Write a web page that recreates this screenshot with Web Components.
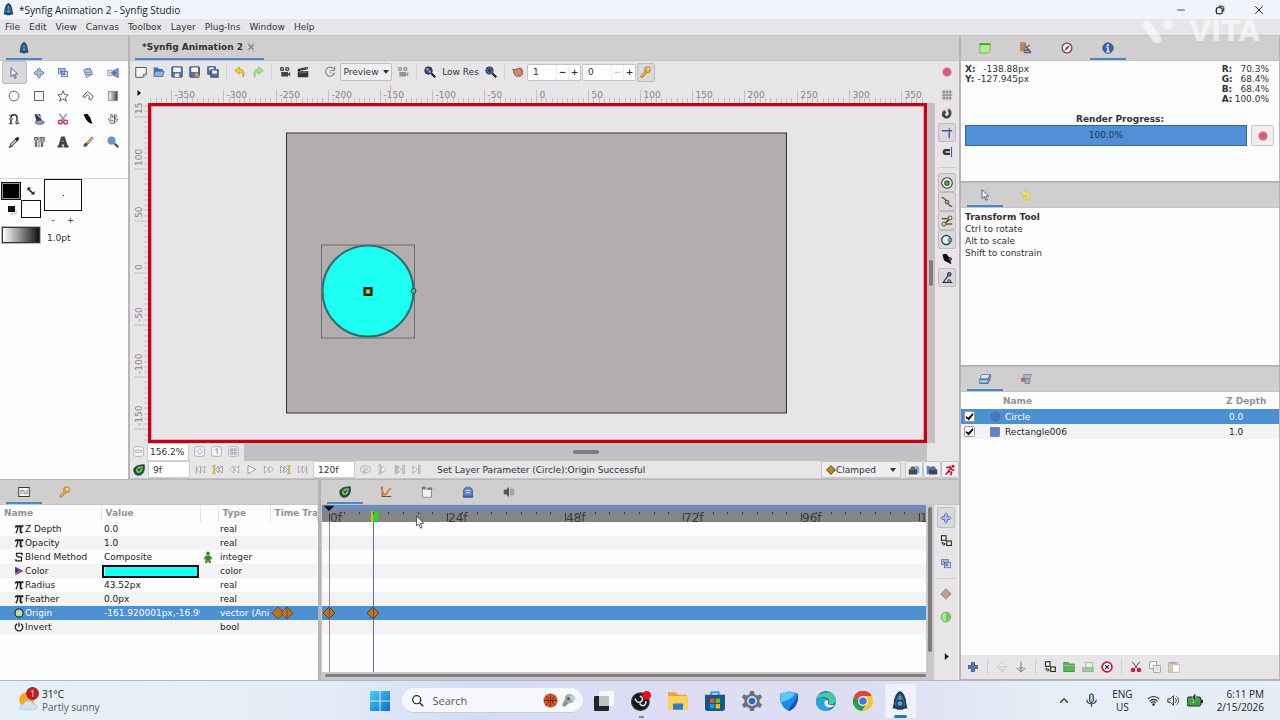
<!DOCTYPE html>
<html lang="en">
<head>
<meta charset="utf-8">
<title>Synfig Studio</title>
<style>
    body {
        margin: 0;
        background: #e7e5e7;
        color: #2e3436;
        font: 9px/12px "DejaVu Sans", sans-serif;
    }
</style>
</head>
<body>
<studio-desktop></studio-desktop>

<script>
const BASE = `
    *, *::before, *::after { box-sizing: border-box; }
    button, input, select { font: inherit; color: inherit; margin: 0; padding: 0; border: 0; background: none; min-width: 0; }
    button { display: flex; align-items: center; justify-content: center; }
    svg { display: block; }
`;

// All icons are drawn on a 16 x 16 grid
const ICONS = {
    synfig: '<path d="M8 0C11 1 13 6 13 10L14 14C12 14 11 14 10 15H6C5 14 4 14 2 14L3 10C3 6 5 1 8 0Z" fill="#1d3c5c"/><path d="M8 2C10 4 12 8 12 11C11 13 10 13 8 13C6 13 5 13 4 11C4 8 6 4 8 2Z" fill="#34709f"/><circle cx="8" cy="10" r="2.500" fill="#5d9fd0" stroke="#173250"/><path d="M8 4V7" stroke="#7fb6dd"/>',
    arrow: '<path d="M4 1V13L7 10L9 15L11 14L9 9.500H13Z" fill="#f4f6fb" stroke="#4b5872" stroke-width="1.200"/>',
    move: '<path d="M8 1L10.500 4H9.500V6.500H12V5.500L15 8L12 10.500V9.500H9.500V12H10.500L8 15L5.500 12H6.500V9.500H4V10.500L1 8L4 5.500V6.500H6.500V4H5.500Z" fill="#b9cdef" stroke="#4a66a0"/>',
    scale: '<rect x="2" y="2" width="9" height="7" fill="#a9bbdc" stroke="#5a74a8"/><rect x="6" y="6" width="8" height="7" fill="#c9d6ef" stroke="#4a66a0"/><path d="M4 4L10 10M10 7V10H7" stroke="#35508a" fill="none"/>',
    rotate: '<path d="M2 4L11 2L14 10L6 14Z" fill="#c4d1ea" stroke="#5a74a8"/><path d="M4 7H11M5 10H12M4 3C8 1 13 4 13 8" stroke="#4a66a0" fill="none"/>',
    mirror: '<path d="M1 4L7 5V11L1 12Z" fill="#e6edf9" stroke="#7288b4"/><path d="M15 2L8 5V11L15 14Z" fill="#7f9ccf" stroke="#4a66a0"/><path d="M3 8H11M10 6L12 8L10 10" stroke="#35508a" fill="none"/>',
    circle: '<circle cx="8" cy="8" r="6.500" fill="#fafafa" stroke="#555" stroke-width="1.200"/>',
    rect: '<rect x="2" y="2" width="12" height="12" fill="#fafafa" stroke="#555" stroke-width="1.200"/>',
    star: '<path d="M8 1L10 6L15 6.500L11 10L12.500 15L8 12L3.500 15L5 10L1 6.500L6 6Z" fill="#fafafa" stroke="#555" stroke-width="1.200"/>',
    polygon: '<path d="M1 9L7 2L15 8L12 13L9 12L10 9L7 6L4 10Z" fill="#fafafa" stroke="#555" stroke-width="1.200"/>',
    gradient: '<defs><linearGradient id="g"><stop offset="0" stop-color="#fff"/><stop offset="1" stop-color="#444"/></linearGradient></defs><rect x="2" y="2" width="12" height="12" fill="url(#g)" stroke="#777"/>',
    spline: '<path d="M4 15V6C4 1 12 1 12 6V15" stroke="#333" fill="none" stroke-width="2"/><path d="M1 3H8M1 14H6M10 14H15" stroke="#333"/><circle cx="4" cy="8" r="1.800" fill="#e9e34a" stroke="#444"/><circle cx="12" cy="12" r="1.800" fill="#e9e34a" stroke="#444"/>',
    bucket: '<path d="M3 2H9L11 9L5 11Z" fill="#3b3f55" stroke="#222"/><ellipse cx="9" cy="12.500" rx="6" ry="2.500" fill="#8fa5d8" stroke="#444"/><path d="M5 1L12 8" stroke="#c8c8d8" stroke-width="1.500"/>',
    cutout: '<path d="M3 1L10 10M13 1L6 10" stroke="#999" stroke-width="2"/><circle cx="4.500" cy="12" r="2.500" fill="#fff" stroke="#c22a45" stroke-width="1.800"/><circle cx="11.500" cy="12" r="2.500" fill="#fff" stroke="#c22a45" stroke-width="1.800"/>',
    width: '<path d="M2 2L7 1L11 6L14 15L8 12L5 8Z" fill="#0a0a0a"/>',
    brushhand: '<path d="M2 8L5 6V2H7V6L12 2L13 4L10 8H14V10L9 14H5Z" fill="#eee" stroke="#555"/><path d="M4 9L9 11M10 2V13" stroke="#444"/>',
    sketch: '<path d="M2 15L4 10L11 3L14 5L7 12Z" fill="#bbb" stroke="#222"/><path d="M9 4L13 1L15 3L12 7Z" fill="#222"/><path d="M1 15L6 14" stroke="#222"/>',
    bones: '<path d="M2 2H6V5L5 6V14H3V6L2 5ZM8 1V15M10 2H15V7L13 9V14H11V9Z" stroke="#555" fill="#aaa" stroke-width="1.200"/>',
    text: '<path d="M6 1H10L14 13H15V15H9V13H10L9.500 11H6.500L6 13H7V15H1V13H2ZM7 8H9L8 4Z" fill="#444" stroke="#222" stroke-width=".500"/>',
    brush: '<path d="M2 14C2 10 4 9 6 9L8 11C7 14 4 15 2 14Z" fill="#6a4a2a"/><path d="M6 9L13 1L15 3L8 11Z" fill="#d9b98a" stroke="#7a5c38"/>',
    zoom: '<circle cx="6" cy="6" r="4.500" fill="#5f97d6" stroke="#7e93ac" stroke-width="2"/><path d="M10 10L15 15" stroke="#444" stroke-width="2.500"/>',
    swap: '<path d="M4 5L11 12" stroke="#111" stroke-width="3"/><path d="M1 8V1H8ZM15 8V15H8Z" fill="#111"/>',
    page: '<path d="M1 2H15V11L11 15H1Z" fill="#f4f4f4" stroke="#555" stroke-width="1.300"/><path d="M15 11H11V15" fill="#bbb" stroke="#555"/>',
    open: '<path d="M1 2H6L8 4H13V14H1Z" fill="#3f6fae"/><path d="M3 7H15L13 14H1Z" fill="#8fb3e0" stroke="#3f6fae"/>',
    save: '<rect x="1" y="1" width="14" height="14" rx="1" fill="#55719f" stroke="#2c4268"/><rect x="3" y="2" width="10" height="6" fill="#f6f6f6"/><rect x="5" y="10" width="6" height="5" fill="#dfe4ee"/>',
    saveas: '<rect x="1" y="1" width="13" height="14" rx="1" fill="#55719f" stroke="#2c4268"/><rect x="3" y="2" width="9" height="6" fill="#f6f6f6"/><path d="M7 14L9 8L13 11L15 15L11 14Z" fill="#e8953a"/>',
    saveall: '<rect x="1" y="1" width="10" height="10" fill="#55719f" stroke="#2c4268"/><rect x="3" y="2" width="6" height="4" fill="#fff"/><rect x="5" y="5" width="10" height="10" fill="#55719f" stroke="#2c4268"/><rect x="7" y="6" width="6" height="4" fill="#fff"/>',
    undo: '<path d="M1 6L7 1V4C13 4 15 9 12 15C12 10 10 8 7 8V11Z" fill="#f0cf30" stroke="#bd9a1a"/>',
    redo: '<path d="M15 6L9 1V4C3 4 1 9 4 15C4 10 6 8 9 8V11Z" fill="#a9dc8c" stroke="#86bd6e"/>',
    render: '<circle cx="4" cy="4" r="3" fill="#555"/><circle cx="11" cy="4" r="3" fill="#555"/><rect x="3" y="8" width="9" height="6" fill="#444"/><path d="M12 10L15 8V14L12 12Z" fill="#555"/><circle cx="4" cy="4" r="1" fill="#ddd"/><circle cx="11" cy="4" r="1" fill="#ddd"/>',
    clapper: '<path d="M1 4L14 1L15 4L1 7Z" fill="#222"/><path d="M4 3L6 5M8 2L10 4M12 1L14 4" stroke="#ddd"/><rect x="1" y="7" width="14" height="8" fill="#333"/><path d="M2 9H14" stroke="#888"/>',
    refresh: '<path d="M13 4A6 6 0 1 0 14 9M14 1V6H9" fill="none" stroke="#888" stroke-width="1.500"/><path d="M8 5V9H12" fill="none" stroke="#aaa"/>',
    lowres: '<circle cx="6" cy="6" r="5" fill="#33425e" stroke="#1d2636"/><path d="M3 3H6V6H3ZM6 6H9V9H6Z" fill="#8fa8cf"/><path d="M10 10L15 15" stroke="#222" stroke-width="3"/>',
    hires: '<circle cx="6" cy="6" r="5" fill="#4f6fa5" stroke="#27354e"/><path d="M6 2V10M2 6H10M3 3L9 9M9 3L3 9" stroke="#27354e"/><path d="M10 10L15 15" stroke="#222" stroke-width="3"/>',
    onion: '<path d="M1 4L4 5C6 3 8 4 9 3C12 2 14 4 14 7C15 11 13 14 9 14C5 14 2 11 2 7Z" fill="#c4785c" stroke="#7d5040"/><path d="M5 6C4 9 6 12 9 14M9 4C8 7 10 11 12 12" stroke="#e9b394" fill="none"/>',
    key: '<circle cx="10" cy="5" r="4" fill="#e0ad4e" stroke="#ad7c2b"/><path d="M7 7L1 13V15H4L9 9Z" fill="#e0ad4e" stroke="#ad7c2b"/><circle cx="11" cy="4" r="1.300" fill="#fff"/>',
    record: '<circle cx="8" cy="8" r="6" fill="#cf6079" stroke="#e3b0ba" stroke-width="1.500"/>',
    grid: '<path d="M4 1V15M8 1V15M12 1V15M1 4H15M1 8H15M1 12H15" stroke="#777" stroke-width="1.200"/>',
    magnet: '<path d="M2 5L5 3L7 6L5 9L8 11C11 9 11 6 9 4L11 1C15 3 15 10 11 13C7 16 1 12 1 9Z" fill="#444"/><path d="M2 5L5 3M9 4L11 1" stroke="#c06070" stroke-width="2"/>',
    guide: '<path d="M1 5H15M11 2V15" stroke="#3f5f9f" stroke-width="1.800"/>',
    magnetguide: '<path d="M12 4H6C1 4 1 12 6 12H12V9H7C5 9 5 7 7 7H12Z" fill="#333"/><path d="M14 1V15" stroke="#3f5f9f" stroke-width="1.500"/>',
    hposition: '<circle cx="8" cy="8" r="7" fill="#fff" stroke="#333" stroke-width="1.500"/><circle cx="8" cy="8" r="3" fill="#49b849" stroke="#195c19" stroke-width="1.500"/>',
    hvertex: '<path d="M1 2C8 2 8 14 15 14" stroke="#333" fill="none" stroke-width="1.500"/><circle cx="8" cy="8" r="2.500" fill="#d8a848" stroke="#333"/>',
    htangent: '<path d="M1 5H12L4 12H15" stroke="#222" stroke-width="1.500" fill="none"/><circle cx="12" cy="4" r="2.700" fill="#e9e34a" stroke="#333"/><circle cx="4" cy="12" r="2.700" fill="#e9e34a" stroke="#333"/>',
    hradius: '<circle cx="7" cy="8" r="6" fill="#eaf6fa" stroke="#2c3e50" stroke-width="1.800"/><circle cx="12" cy="8" r="2.500" fill="#45c0c4" stroke="#245"/>',
    hwidth: '<path d="M2 2L7 1L11 6L14 15L8 12L4 10Z" fill="#0a0a0a"/><circle cx="12" cy="8" r="2" fill="#c032b0" stroke="#222"/>',
    hangle: '<path d="M12 1L3 14H15" stroke="#222" fill="none" stroke-width="1.500"/><circle cx="11" cy="3" r="2.500" fill="#4b7ce8" stroke="#222"/><circle cx="11" cy="12" r="2" fill="#7da0ee" stroke="#333"/>',
    playmark: '<path d="M5 2L12 8L5 14Z" fill="#111"/>',
    zoomout: '<rect x="1" y="1" width="14" height="14" rx="3" fill="#f6f6f6" stroke="#999"/><rect x="4" y="6" width="8" height="3" fill="#fff" stroke="#888"/>',
    zoomin: '<rect x="1" y="1" width="14" height="14" rx="3" fill="#f6f6f6" stroke="#999"/><path d="M8 4L12 8L8 12L4 8Z" fill="#fff" stroke="#777"/>',
    zoomone: '<rect x="1" y="1" width="14" height="14" rx="3" fill="#f6f6f6" stroke="#999"/><path d="M6 6L9 4V12" stroke="#999" stroke-width="1.500" fill="none"/>',
    zoomfit: '<rect x="1" y="1" width="14" height="14" rx="3" fill="#f6f6f6" stroke="#999"/><path d="M4 4H7V7H4ZM9 4H12V7H9ZM4 9H7V12H4ZM9 9H12V12H9Z" fill="#fff" stroke="#777"/>',
    first: '<path d="M2 2V14M3 8L8 3V13ZM9 8L14 3V13Z" fill="#fff" stroke="#888"/>',
    prevkey: '<path d="M1 2H5L3 8L5 14H1L3 8Z" fill="#e5d855" stroke="#b2a533"/><path d="M5 8L10 3V13ZM10 8L15 3V13Z" fill="#fff" stroke="#777"/>',
    prev: '<path d="M1 8L7 3V13ZM8 8L14 3V13Z" fill="#fff" stroke="#888"/>',
    play: '<path d="M3 2L14 8L3 14Z" fill="#fff" stroke="#888" stroke-width="1.200"/>',
    next: '<path d="M15 8L9 3V13ZM8 8L2 3V13Z" fill="#fff" stroke="#888"/>',
    nextkey: '<path d="M15 2H11L13 8L11 14H15L13 8Z" fill="#e5d855" stroke="#b2a533"/><path d="M11 8L6 3V13ZM6 8L1 3V13Z" fill="#fff" stroke="#777"/>',
    last: '<path d="M14 2V14M13 8L8 3V13ZM7 8L2 3V13Z" fill="#fff" stroke="#888"/>',
    loop: '<rect x="1" y="3" width="14" height="9" rx="4" fill="#fff" stroke="#888"/><rect x="4" y="6" width="8" height="3" rx="1" fill="#e7e5e7" stroke="#999"/><path d="M7 10V15L4 12Z" fill="#fff" stroke="#999"/>',
    boundlow: '<path d="M3 1H5V15H3ZM7 3L13 8L7 13Z" fill="#fff" stroke="#999"/>',
    boundboth: '<path d="M2 2H4V14H2ZM6 3L11 8L6 13ZM13 2H15V14H13Z" fill="#fff" stroke="#888"/>',
    boundup: '<path d="M3 3L9 8L3 13ZM11 2H13V14H11Z" fill="#fff" stroke="#888"/>',
    timetrack: '<path d="M15 1C16 8 14 15 7 15C3 15 1 12 1 8C1 4 6 1 15 1Z" fill="#2c4a3d" stroke="#23384c"/><path d="M13 3C13 8 12 12 7 12C5 12 4 10 4 8C4 5 8 3 13 3Z" fill="#6fd05f"/><path d="M6 6L8 9L11 5" fill="none" stroke="#1c4020" stroke-width="1.500"/>',
    graphs: '<path d="M3 1V14H15" stroke="#555" stroke-width="1.500" fill="none"/><path d="M1 3C3 3 4 12 6 12C9 12 10 5 15 3" stroke="#ef7a22" stroke-width="2.500" fill="none"/>',
    canvasmeta: '<path d="M2 4H14V15H2Z" fill="#f1f1f1" stroke="#777"/><path d="M1 1H6V4H1ZM9 2H15V5H9Z" fill="#777"/>',
    library: '<path d="M2 15V6C2 0 14 0 14 6V15Z" fill="#5b83c4" stroke="#3c5c94"/><path d="M5 6H11M5 9H11" stroke="#d6e2f5" stroke-width="1.500"/><path d="M1 14H15" stroke="#3c5c94" stroke-width="2"/>',
    sound: '<path d="M1 5H4L8 1V15L4 11H1Z" fill="#555"/><path d="M10 4V12M12 2V14M14 4V12" stroke="#8b97ab" stroke-width="1.500"/>',
    params: '<rect x="1" y="2" width="14" height="12" fill="#fff" stroke="#333" stroke-width="1.300"/><path d="M4 5V11M6 5V7M8 5V11M10 9V11M12 5V11" stroke="#444"/>',
    note: '<path d="M1 2H15V12L12 15H1Z" fill="#b4e88c" stroke="#6ba84a"/><path d="M1 3H15" stroke="#4f9a38" stroke-width="2"/>',
    palette: '<path d="M1 1H7V4H1ZM1 5H7V8H1ZM1 9H7V12H1Z" fill="#e89a4a" stroke="#a35c28"/><path d="M7 5L14 13M5 14H15M10 6L13 4M5 11H12" stroke="#4d6288" stroke-width="2"/>',
    navigator: '<circle cx="8" cy="8" r="6.500" fill="#f6eef0" stroke="#7b4453" stroke-width="1.800"/><path d="M12 4L9 9L4 12L7 7Z" fill="#7b3040"/>',
    info: '<circle cx="8" cy="8" r="7" fill="#3467b0" stroke="#274e86"/><path d="M8 7V13M6 13H10M6 7H8" stroke="#fff" stroke-width="1.800"/><circle cx="8" cy="4" r="1.300" fill="#fff"/>',
    history: '<path d="M1 6L7 1V4C12 4 15 8 13 12C11 16 5 15 4 11L7 11C9 12 11 10 9 8H7V11Z" fill="#efe063" stroke="#d4c34a"/>',
    layers: '<path d="M4 2H15L12 8H1Z" fill="#dbe5f5" stroke="#5b76a8"/><path d="M1 8H12V14H1ZM12 8L15 2V8L12 14" fill="#7d9ccf" stroke="#44608f"/><path d="M1 11H12" stroke="#fff"/>',
    canvases: '<path d="M5 2H15L13 8H5Z" fill="#a9b8d0" stroke="#6d7b94"/><path d="M5 8H13V14H7Z" fill="#b6aab8" stroke="#7d7080"/><path d="M1 7L7 6V11L2 12Z" fill="#b36474"/>',
    pi: '<path d="M1 5C2 2 3 2 5 2H15V5H12V12C12 13 13 13 14 12V14C11 16 9 15 9 12V5H7C7 9 6 12 4 15L2 14C4 11 5 8 5 5H4C3 5 3 5 2 6Z" fill="#222"/>',
    enumtype: '<path d="M13 5V2H4V6L8 8H12V14H3V11M12 8L6 8" stroke="#222" fill="none" stroke-width="2"/>',
    colortype: '<path d="M2 1L8 8L2 15Z" fill="#2fb56c"/><path d="M2 1L15 8H8Z" fill="#3347c9"/><path d="M2 15L15 8H7Z" fill="#d83434"/><path d="M2 1L7 8L2 11Z" fill="#222b8f"/>',
    origin: '<circle cx="8" cy="8" r="6.500" fill="#b5e2a6" stroke="#222" stroke-width="1.800"/>',
    power: '<path d="M5 3A6 6 0 1 0 11 3M8 1V8" stroke="#222" stroke-width="2" fill="none"/>',
    man: '<circle cx="8" cy="3" r="2.500" fill="#3d8a20"/><path d="M5 6H11L14 11H11L12 16H9L8 12L7 16H4L5 11H2Z" fill="#3d8a20"/>',
    keyframe: '<path d="M8 0L16 8L8 16L0 8Z" fill="#b9741c" stroke="#59401e"/>',
    keyframeline: '<path d="M8 0L16 8L8 16L0 8Z" fill="#b9741c" stroke="#59401e"/><path d="M8 0V16" stroke="#4d3a6a"/>',
    clamped: '<path d="M8 1L15 8L8 15L1 8Z" fill="#b98a1c" stroke="#4a3a10" stroke-width="1.500"/>',
    lockpast: '<path d="M10 2L15 4V12L10 14Z" fill="#7fa8d8"/><path d="M1 7H12V14H1Z" fill="#44494c"/><path d="M3 7V6C4 2 9 2 10 6V7Z" fill="#5c6468"/>',
    lockfuture: '<path d="M1 2L7 4V12L1 14Z" fill="#4f88cc"/><path d="M4 7H15V14H4Z" fill="#3c4854"/><path d="M6 7V6C7 2 12 2 13 6V7Z" fill="#4f6a88"/>',
    animate: '<circle cx="12" cy="3" r="2" fill="#d01028"/><path d="M3 5L8 4L11 8L14 8M8 6L6 10L10 11L9 15M6 10L2 14" stroke="#d01028" stroke-width="2.200" fill="none"/>',
    group: '<rect x="2" y="1" width="6" height="6" fill="#fff" stroke="#222" stroke-width="1.500"/><rect x="9" y="8" width="6" height="6" fill="#fff6b8" stroke="#222" stroke-width="1.500"/><path d="M3 9V12H7M5 10L7 12L5 14" stroke="#222" stroke-width="1.300" fill="none"/>',
    diamondoff: '<path d="M8 1L15 8L8 15L1 8Z" fill="#b9a27c" stroke="#8a8070"/>',
    half: '<circle cx="8" cy="8" r="6.500" fill="#a6e890" stroke="#5c9a4c"/><path d="M8 2V14A6 6 0 0 0 8 2Z" fill="#74c860"/>',
    plus: '<path d="M6 2H10V6H14V10H10V14H6V10H2V6H6Z" fill="#4f78b8" stroke="#2f4a7a"/>',
    up: '<path d="M8 2L14 8H10L8 6L6 8H2ZM8 7L12 11H9V14H7V11H4Z" fill="#f6f6f6" stroke="#bbb"/>',
    down: '<path d="M8 15L14 9M8 15L2 9M8 1V14M5 8L8 11L11 8" fill="none" stroke="#777" stroke-width="1.300"/>',
    newgroup: '<path d="M1 2H7L8 4H15V14H1Z" fill="#62b25a" stroke="#36803a"/><path d="M1 6H15" stroke="#8fd685"/>',
    dupgroup: '<path d="M5 2H14V12H5Z" fill="#e6efe2" stroke="#98ac94"/><path d="M1 9H15V14H1Z" fill="#a9c8a2" stroke="#86a080"/>',
    remove: '<circle cx="8" cy="8" r="6.500" fill="#fff" stroke="#c0203a" stroke-width="2.500"/><path d="M5.500 5.500L10.500 10.500M10.500 5.500L5.500 10.500" stroke="#222" stroke-width="1.500"/>',
    cut: '<path d="M3 1L10 10M13 1L6 10" stroke="#666" stroke-width="1.500"/><circle cx="4" cy="12" r="3" fill="#c0203a"/><circle cx="12" cy="12" r="3" fill="#c0203a"/>',
    copy: '<rect x="1" y="1" width="9" height="9" fill="#fff" stroke="#888"/><rect x="6" y="6" width="9" height="9" fill="#fff" stroke="#888"/><path d="M8 9H13M8 12H13" stroke="#aaa"/>',
    paste: '<rect x="1" y="2" width="12" height="13" fill="#d8cdb8" stroke="#b0a48e"/><rect x="6" y="5" width="9" height="10" fill="#fdfdfd" stroke="#bbb"/><rect x="4" y="1" width="6" height="3" fill="#aaa"/>',
    square: '<rect x="1" y="1" width="14" height="14" fill="#5a86c4" stroke="#47699c"/>',
    disc: '<circle cx="8" cy="8" r="6.500" fill="#4678be" stroke="#3d66a4"/>',
    close: '<path d="M4 4L12 12M12 4L4 12" stroke="#888" stroke-width="2.500"/><path d="M2 2H6M10 2H14M2 14H6M10 14H14" stroke="#999"/>',
    winmin: '<path d="M3 8H13" stroke="#111"/>',
    winmax: '<rect x="3" y="5" width="8" height="8" rx="2" fill="none" stroke="#111" stroke-width="1.500"/><path d="M6 3H11C12.500 3 13 4 13 5V10" fill="none" stroke="#111" stroke-width="1.300"/>',
    winclose: '<path d="M3 3L13 13M13 3L3 13" stroke="#111" stroke-width="1.200"/>',
    start: '<defs><linearGradient id="w" x2="1" y2="1"><stop offset="0" stop-color="#4fd0f4"/><stop offset="1" stop-color="#0a6cc8"/></linearGradient></defs><path d="M0 0H7.600V7.600H0ZM8.400 0H16V7.600H8.400ZM0 8.400H7.600V16H0ZM8.400 8.400H16V16H8.400Z" fill="url(#w)"/>',
    search: '<circle cx="7" cy="7" r="5" fill="none" stroke="#222" stroke-width="1.500"/><path d="M11 11L15 15" stroke="#222" stroke-width="1.800"/>',
    ball: '<circle cx="8" cy="8" r="7.500" fill="#d8582c"/><path d="M8 1V15M1 8H15M3 3C7 6 7 11 3 13M13 3C9 6 9 11 13 13" stroke="#6d2614" fill="none"/>',
    whistle: '<path d="M5 5L9 10L4 15L1 13Z" fill="#8e949b"/><circle cx="9" cy="6" r="5" fill="#a4a9af"/><path d="M8 2L15 4V8L11 8Z" fill="#c8ccd1"/><circle cx="8" cy="6" r="1.800" fill="#666"/>',
    taskview: '<rect x="0" y="4" width="12" height="12" rx="1" fill="#232629"/><rect x="4" y="0" width="12" height="12" rx="1" fill="#f7f7f7"/><rect x="4" y="4" width="8" height="8" fill="#bfc1c4"/>',
    obs: '<circle cx="7.500" cy="8.500" r="7" fill="#17181b" stroke="#333"/><path d="M7 4C10 5 10 8 7 9C4 10 4 7 3 6M12 8C12 12 9 13 7 10" stroke="#ddd" stroke-width="1.300" fill="none"/><circle cx="12.500" cy="3.500" r="3.500" fill="#e80f1c"/>',
    explorer: '<path d="M0 1H6L8 3H15V14H0Z" fill="#e8a92c"/><path d="M0 4H16V15H0Z" fill="#fbd35c"/><path d="M4 10H12V15H4Z" fill="#2b7cc0"/>',
    store: '<path d="M5 4V1H11V4" fill="none" stroke="#3aa0dc" stroke-width="1.500"/><path d="M0 3H16V14C16 15 15 16 14 16H2C1 16 0 15 0 14Z" fill="#17578c"/><path d="M4 6H7.500V9.500H4Z" fill="#f25022"/><path d="M8.500 6H12V9.500H8.500Z" fill="#7fba00"/><path d="M4 10.500H7.500V14H4Z" fill="#00a4ef"/><path d="M8.500 10.500H12V14H8.500Z" fill="#ffb900"/>',
    settings: '<path d="M6.500 0H9.500L10 2.500L12.500 3.500L14.500 2.500L16 5L14 7V9L16 11L14.500 13.500L12.500 12.500L10 13.500L9.500 16H6.500L6 13.500L3.500 12.500L1.500 13.500L0 11L2 9V7L0 5L1.500 2.500L3.500 3.500L6 2.500Z" fill="#6a7179"/><circle cx="8" cy="8" r="4" fill="#cfd5db"/><circle cx="8" cy="8" r="2.500" fill="#2a6ab0"/>',
    shield: '<path d="M8 0C11 2 14 1 15 2C16 9 13 14 8 16C3 14 0 9 1 2C3 1 5 2 8 0Z" fill="#1f8be8"/><path d="M15 2C16 9 13 14 8 16C7 13 13 10 15 2Z" fill="#1150b8"/><path d="M1 2C3 1 5 2 8 0C10 2 12 2 13 2C10 7 5 8 2 9C1 6 1 4 1 2Z" fill="#5cc8f8"/>',
    edge: '<circle cx="8" cy="8" r="8" fill="#1769b8"/><path d="M0 7C1 0 15-2 16 7C16 11 11 11 10 10C12 5 5 3 0 7Z" fill="#48c9a0"/><path d="M0 7C4 4 8 5 8 7C5 9 7 14 12 14C5 19-1 13 0 7Z" fill="#2aa5e0"/><path d="M8 7C10 7 10 9 9.500 10C11 12 14 11 15 11C13 14 8 14 7 11C6 9 7 8 8 7Z" fill="#e8eefa"/>',
    chrome: '<circle cx="8" cy="8" r="8" fill="#f5c32c"/><path d="M1 4A8 8 0 0 1 15 4H8L5 9Z" fill="#dd4437"/><path d="M1 4A8 8 0 0 0 7 16L11 10L5 9Z" fill="#2c9b4a"/><circle cx="8" cy="8" r="4" fill="#fff"/><circle cx="8" cy="8" r="3" fill="#3f79e0"/>',
    chevron: '<path d="M3 10L8 5L13 10" stroke="#222" stroke-width="1.500" fill="none"/>',
    mic: '<rect x="6" y="1" width="4" height="9" rx="2" fill="#bcd0e4" stroke="#345" stroke-width="1.200"/><path d="M3 7C3 13 13 13 13 7M8 12V15" stroke="#345" stroke-width="1.200" fill="none"/>',
    wifi: '<path d="M1 6C5 2 11 2 15 6M3 9C6 6 10 6 13 9M5 11C7 9 9 9 11 11" stroke="#222" stroke-width="1.300" fill="none"/><circle cx="8" cy="13" r="1.500" fill="#222"/>',
    volume: '<path d="M1 6H4L8 2V14L4 10H1Z" fill="none" stroke="#333" stroke-width="1.200"/><path d="M10 5C12 7 12 9 10 11M12 3C15 6 15 10 12 13" stroke="#333" fill="none" stroke-width="1.200"/>',
    battery: '<rect x="0" y="4" width="14" height="9" rx="2" fill="#3fa33c" stroke="#222"/><path d="M15 7V10" stroke="#222" stroke-width="2"/><path d="M7 1L5 6H7L6 10L10 5H8L9 1Z" fill="#222" stroke="#fff" stroke-width=".500"/>',
    weather: '<circle cx="7" cy="7" r="6" fill="#f5a623"/><path d="M4 15C0 15 1 10 4 11C5 7 11 7 12 10C16 10 16 15 13 15Z" fill="#cfdff5" stroke="#a9c0e4" stroke-width=".500"/>',
    cursor: '<path d="M3 0V12L6 10L8 15L10 14L8 9H12Z" fill="#fff" stroke="#333"/>'
};

class StudioElement extends HTMLElement {
    connectedCallback() {
        const shadow = this.attachShadow({ mode: 'open' });
        shadow.innerHTML = `<style>${BASE}</style>${this.render()}`;
    }
}

class StudioIcon extends StudioElement {
    render() {
        const size = this.getAttribute('size') || 12;
        return `
<style>
    :host { display: block; flex: none; }
</style>
<svg width="${size}" height="${size}" viewBox="0 0 16 16" aria-hidden="true">${ICONS[this.getAttribute('name')]}</svg>`;
    }
}

class IconButton extends StudioElement {
    render() {
        return `
<style>
    :host { display: block; flex: none; width: 18px; height: 19px; }
    button { width: 100%; height: 100%; border: 1px solid transparent; border-radius: 2px; }
    :host([on]) button { background: #dad8da; border-color: #bfbdbf; }
    :host([raised]) button { background: #f0eef0; border-color: #c6c4c6; }
    :host([dim]) button { opacity: .5; }
</style>
<button type="button" aria-label="${this.getAttribute('name')}"><studio-icon name="${this.getAttribute('name')}" size="${this.getAttribute('size') || 12}"></studio-icon></button>`;
    }
}

class DockTabs extends StudioElement {
    render() {
        const active = this.getAttribute('active') || '0';
        const tabs = this.getAttribute('icons').split(' ').map((name, i) => `
            <button type="button" role="tab" aria-label="${name}" aria-selected="${String(i) === active}"><studio-icon name="${name}"></studio-icon></button>`);
        return `
<style>
    :host { display: flex; flex: none; gap: 5px; height: 25px; padding: 0 6px; background: #d0cecf; border-bottom: 1px solid #c6c4c5; }
    button { width: 36px; border-bottom: 2px solid transparent; border-top: 2px solid transparent; }
    button[aria-selected=true] { border-bottom-color: #4a86c8; }
</style>${tabs.join('')}`;
    }
}

class TitleBar extends StudioElement {
    render() {
        return `
<style>
    :host { display: flex; flex: none; align-items: center; gap: 4px; height: 19px; padding: 0 2px 0 2px; background: #f0f4fb; color: #222; font: 10px/14px "Open Sans", "Noto Sans", sans-serif; }
    span { flex: 1; }
    .controls { display: flex; }
    .controls button { width: 39px; }
</style>
<studio-icon name="synfig" size="13"></studio-icon>
<span>*Synfig Animation 2 - Synfig Studio</span>
<div class="controls">
    <button type="button" aria-label="Minimize"><studio-icon name="winmin"></studio-icon></button>
    <button type="button" aria-label="Restore"><studio-icon name="winmax"></studio-icon></button>
    <button type="button" aria-label="Close"><studio-icon name="winclose"></studio-icon></button>
</div>`;
    }
}

class MenuBar extends StudioElement {
    render() {
        const items = ['File', 'Edit', 'View', 'Canvas', 'Toolbox', 'Layer', 'Plug-Ins', 'Window', 'Help'];
        return `
<style>
    :host { display: flex; flex: none; gap: 9px; height: 17px; padding: 0 5px; align-items: center; background: #e7e5e7; border-bottom: 1px solid #c4c2c4; }
</style>${items.map(item => `<button type="button">${item}</button>`).join('')}`;
    }
}

class ToolBox extends StudioElement {
    render() {
        const tools = 'arrow move scale rotate mirror circle rect star polygon gradient spline bucket cutout width brushhand sketch bones text brush zoom'.split(' ');
        return `
<style>
    :host { display: flex; flex-direction: column; flex: none; width: 130px; background: #fdfdfd; border-right: 2px solid #b6b4b6; }
    .tools { display: grid; grid-template-columns: repeat(5, 1fr); grid-auto-rows: 23px; padding: 0 3px 0 2px; height: 118px; border-bottom: 1px solid #d8d6d8; }
    .tools icon-button { width: auto; height: 23px; }
    .colors { display: flex; gap: 3px; padding-left: 1px; }
    .swatches { display: grid; grid-template: 18px 18px / 20px 20px; place-items: center; padding-top: 3px; }
    .swatches button { width: 20px; height: 18px; border: 1px solid #111; }
    .fg { background: #000; outline: 1px solid #999; outline-offset: -2px; }
    .bg { background: #fff; }
    .reset { width: 7px; height: 6px; background: #111; box-shadow: 2px 3px #ddd; }
    .brush { display: grid; place-items: center; width: 38px; height: 32px; border: 1px solid #111; }
    .brush i { width: 1px; height: 1px; background: #111; }
    .size { display: flex; justify-content: center; gap: 12px; padding-top: 3px; }
    .width { display: flex; gap: 7px; padding-left: 2px; align-items: center; }
    .ramp { width: 38px; height: 16px; border: 1px solid #333; background: linear-gradient(90deg, #fff, #111); outline: 1px solid #bbb; }
    .width span { padding-top: 6px; }
</style>
<dock-tabs icons="synfig"></dock-tabs>
<div class="tools">${tools.map((t, i) => `<icon-button name="${t}" ${i ? '' : 'on'}></icon-button>`).join('')}</div>
<div class="colors">
    <div class="swatches">
        <button class="fg" type="button" aria-label="Outline color"></button>
        <studio-icon name="swap" size="8"></studio-icon>
        <div class="reset"></div>
        <button class="bg" type="button" aria-label="Fill color"></button>
    </div>
    <div>
        <div class="brush"><i></i></div>
        <div class="size"><button type="button">-</button><button type="button">+</button></div>
    </div>
</div>
<div class="width"><div class="ramp"></div><span>1.0pt</span></div>`;
    }
}

class SpinBox extends StudioElement {
    render() {
        return `
<style>
    :host { display: flex; flex: none; width: 54px; height: 17px; background: #fff; border: 1px solid #c6c4c6; border-radius: 2px; }
    input { flex: 1; width: 0; padding-left: 5px; }
    button { width: 12px; border-left: 1px solid #eceaec; font-weight: bold; }
    :host([floor]) button:first-of-type { color: #ccc; }
</style>
<input type="text" aria-label="${this.getAttribute('label')}" value="${this.getAttribute('value')}"><button type="button">−</button><button type="button">+</button>`;
    }
}

class CanvasToolbar extends StudioElement {
    render() {
        const buttons = names => names.split(' ').map(n => `<icon-button name="${n}"></icon-button>`).join('');
        return `
<style>
    :host { display: flex; flex: none; align-items: center; height: 22px; padding: 0 3px 0 2px; }
    hr { flex: none; width: 1px; height: 16px; margin: 0 4px; border: 0; background: #d0ced0; }
    .preview { width: 52px; height: 18px; margin: 0 2px 0 1px; gap: 4px; border: 1px solid #bfbdbf; border-radius: 2px; background: #f0eef0; }
    .preview i { border: 3px solid transparent; border-top: 4px solid #333; border-bottom: 0; }
    .gap { width: 9px; }
    .low { width: 43px; text-align: center; }
    spin-box { margin: 0 1px 0 0; }
    .record { margin-left: auto; }
</style>
${buttons('page open save saveas saveall')}<hr>${buttons('undo redo')}<hr>${buttons('render clapper')}
<span class="gap"></span>${buttons('refresh')}
<button class="preview" type="button">Preview<i></i></button>
<icon-button name="render" dim></icon-button><hr>${buttons('lowres')}
<span class="low">Low Res</span>${buttons('hires')}<hr>${buttons('onion')}
<spin-box label="Past" value="1"></spin-box><spin-box label="Future" value="0" floor></spin-box>
<icon-button name="key" on></icon-button>
<icon-button class="record" name="record"></icon-button>`;
    }
}

// Ruler whose zero sits in the middle of its track; 50 units span 52 pixels
class CanvasRuler extends StudioElement {
    render() {
        const vertical = this.hasAttribute('vertical');
        const step = 5.21;
        const last = vertical ? 30 : 70;
        let marks = '';
        for (let i = -last - 9; i <= last + 9; i++) {
            const at = Math.round(i * step) - 1;
            const major = i % 10 === 0;
            if (vertical) {
                marks += `<path d="M${major ? 4 : 14} ${at + 1}H18"/>`;
                if (major) marks += `<text transform="translate(12 ${at - 2}) rotate(-90)">${-i * 5}</text>`;
            } else {
                marks += `<path d="M${at} ${major ? 7 : 15}V20"/>`;
                if (major) marks += `<text x="${at + 3}" y="15">${i * 5}</text>`;
            }
        }
        const origin = vertical ? 'y="50%"' : 'x="50%"';
        const pointer = vertical ? '' : '<path d="M-147 2V20" stroke="#aaa"/>';
        return `
<style>
    :host { display: block; overflow: hidden; min-height: 0; min-width: 0; contain: size; }
    path { stroke: #c2c0c2; }
    text { fill: #858385; font-size: 9px; }
</style>
<svg width="100%" height="100%"><svg ${origin} width="1" height="1" overflow="visible">${marks}${pointer}</svg></svg>`;
    }
}

class WorkArea extends StudioElement {
    render() {
        return `
<style>
    :host { display: block; overflow: hidden; border: 3px solid #c00418; outline: 1px solid #e9a0a8; outline-offset: -4px; background: #e7e5e8; contain: size; }
</style>
<svg width="100%" height="100%">
    <svg x="50%" y="50%" width="1" height="1" overflow="visible">
        <rect x="-251" y="-140" width="500" height="280" fill="#b3adb0" stroke="#333"/>
        <circle cx="-169.500" cy="18" r="45.500" fill="#1cfff0" stroke="#2d6f70" stroke-width="2"/>
        <rect x="-216" y="-28" width="93" height="93" fill="none" stroke="#6f6b6e"/>
        <rect x="-173" y="15" width="7" height="7" fill="#3d9a28" stroke="#111" stroke-width="2"/>
        <circle cx="-169.500" cy="18.500" r="2" fill="#8fe03c"/>
        <circle cx="-124" cy="18" r="2.500" fill="#3fb8b0" stroke="#245"/>
    </svg>
</svg>`;
    }
}

class CanvasWindow extends StudioElement {
    render() {
        const side = ['hposition', 'hvertex', 'htangent', 'hradius', 'hwidth', 'hangle'];
        const seek = ['first', 'prevkey', 'prev', 'play', 'next', 'nextkey', 'last'];
        return `
<style>
    :host { display: flex; flex-direction: column; flex: 1; min-width: 0; background: #e7e5e7; }
    .tabs { display: flex; flex: none; height: 25px; padding-left: 5px; background: #d0cecf; border-bottom: 1px solid #c6c4c5; }
    .tab { display: flex; align-items: center; gap: 3px; padding: 0 8px 0 7px; border-bottom: 2px solid #4a86c8; font-weight: bold; }
    .middle { display: flex; flex: 1; min-height: 0; }
    .view { display: grid; flex: 1; min-width: 0; grid-template: 20px 1fr 18px / 18px 1fr 8px; }
    .corner { display: grid; place-items: center; }
    .vscroll { display: flex; align-items: center; justify-content: center; background: #c3c1c3; }
    .vscroll i { width: 4px; height: 26px; border-radius: 2px; background: #7e7c7e; }
    .zoom { display: flex; grid-column: 1 / 3; }
    .hscroll { display: flex; flex: 1; align-items: center; justify-content: center; background: #c3c1c3; }
    .hscroll i { width: 26px; height: 4px; border-radius: 2px; background: #7e7c7e; }
    input { width: 42px; padding: 0 4px; background: #fff; border: 1px solid #cfcdcf; }
    .zoom input { padding: 0 2px; }
    .group { display: flex; padding: 0 2px; }
    .group icon-button, .zoom icon-button { width: 17px; height: 17px; }
    .side { display: flex; flex-direction: column; align-items: center; flex: none; width: 24px; padding-top: 2px; }
    .side hr { width: 18px; height: 1px; margin: 6px 0 5px; border: 0; background: #cfcdcf; }
    .time { display: flex; flex: none; align-items: center; height: 18px; border-bottom: 1px solid #c6c4c5; }
    .time input { height: 17px; }
    .time > icon-button { height: 17px; }
    .status { flex: 1; padding-left: 10px; white-space: nowrap; }
    .mode { display: flex; align-items: center; width: 80px; height: 17px; margin-right: 4px; padding: 0 4px; border: 1px solid #c6c4c6; border-radius: 2px; background: #f0eef0; }
    .mode select { flex: 1; appearance: none; }
    .mode i { border: 3px solid transparent; border-top: 4px solid #333; border-bottom: 0; }
</style>
<div class="tabs"><div class="tab">*Synfig Animation 2 <studio-icon name="close" size="10"></studio-icon></div></div>
<canvas-toolbar></canvas-toolbar>
<div class="middle">
    <div class="view">
        <div class="corner"><studio-icon name="playmark" size="8"></studio-icon></div>
        <canvas-ruler></canvas-ruler>
        <span></span>
        <canvas-ruler vertical></canvas-ruler>
        <work-area></work-area>
        <div class="vscroll"><i></i></div>
        <div class="zoom">
            <icon-button name="zoomout" size="11"></icon-button>
            <input type="text" aria-label="Zoom" value="156.2%">
            <div class="group">
                <icon-button name="zoomin" size="11"></icon-button>
                <icon-button name="zoomone" size="11"></icon-button>
                <icon-button name="zoomfit" size="11"></icon-button>
            </div>
            <div class="hscroll"><i></i></div>
        </div>
    </div>
    <div class="side">
        <icon-button name="grid"></icon-button>
        <icon-button name="magnet"></icon-button>
        <icon-button name="guide" on></icon-button>
        <icon-button name="magnetguide"></icon-button>
        <hr>
        ${side.map(n => `<icon-button name="${n}" ${n === 'hwidth' ? '' : 'on'}></icon-button>`).join('')}
    </div>
</div>
<div class="time">
    <icon-button name="timetrack"></icon-button>
    <input type="text" aria-label="Current time" value="9f">
    <div class="group">${seek.map(n => `<icon-button name="${n}" size="11"></icon-button>`).join('')}</div>
    <input type="text" aria-label="End time" value="120f">
    <div class="group">
        <icon-button name="loop" size="11"></icon-button><icon-button name="boundlow" size="11"></icon-button>
        <icon-button name="boundboth" size="11"></icon-button><icon-button name="boundup" size="11"></icon-button>
    </div>
    <span class="status">Set Layer Parameter (Circle):Origin Successful</span>
    <label class="mode"><studio-icon name="clamped" size="10"></studio-icon><select aria-label="Interpolation"><option>Clamped</option></select><i></i></label>
    <icon-button name="lockpast" raised></icon-button>
    <icon-button name="lockfuture" raised></icon-button>
    <icon-button name="animate" raised></icon-button>
</div>`;
    }
}

class ParamsDock extends StudioElement {
    render() {
        const rows = [
            ['pi', 'Z Depth', '0.0', 'real'],
            ['pi', 'Opacity', '1.0', 'real'],
            ['enumtype', 'Blend Method', 'Composite', 'integer'],
            ['colortype', 'Color', '', 'color'],
            ['pi', 'Radius', '43.52px', 'real'],
            ['pi', 'Feather', '0.0px', 'real'],
            ['origin', 'Origin', '-161.920001px,-16.995', 'vector (Ani'],
            ['power', 'Invert', '', 'bool']
        ];
        const body = rows.map(([icon, name, value, type]) => `
    <tr class="${name === 'Origin' ? 'selected' : ''}">
        <td><div class="name"><studio-icon name="${icon}" size="10"></studio-icon>${name}</div></td>
        <td>${name === 'Color' ? '<div class="swatch"></div>' : value}</td>
        <td>${name === 'Blend Method' ? '<studio-icon name="man"></studio-icon>' : ''}</td>
        <td>${type}</td>
        <td>${name === 'Origin' ? '<div class="keys"><studio-icon name="keyframe"></studio-icon><studio-icon name="keyframeline"></studio-icon></div>' : ''}</td>
    </tr>`).join('');
        return `
<style>
    :host { display: flex; flex-direction: column; flex: none; width: 321px; background: #fdfdfd; border-right: 3px solid #b6b4b6; color: #222; }
    table { width: 100%; table-layout: fixed; border-collapse: collapse; }
    th, td { overflow: hidden; padding: 0 0 0 3px; text-align: left; white-space: nowrap; }
    th { height: 17px; padding: 0 0 2px 4px; border-right: 1px solid #e4e2e4; color: #939193; }
    td { height: 14px; line-height: 14px; }
    tbody tr:nth-child(even) { background: #f3f2f4; }
    tbody tr.selected { background: #4a90d2; color: #fff; }
    .name { display: flex; align-items: center; gap: 1px; padding-left: 11px; }
    .swatch { height: 13px; border: 2px solid #111; background: #1cfff0; box-shadow: inset 1px 0 #b8fff8; margin: 0 1px 0 -2px; }
    .keys { display: flex; }
    .keys :last-child { margin-left: -3px; }
    td:nth-child(3), td:nth-child(4), td:nth-child(5) { padding-left: 2px; }
</style>
<dock-tabs icons="params key"></dock-tabs>
<table>
    <colgroup><col style="width:101px"><col style="width:99px"><col style="width:18px"><col style="width:52px"><col></colgroup>
    <thead><tr><th>Name</th><th>Value</th><th></th><th>Type</th><th>Time Track</th></tr></thead>
    <tbody>${body}</tbody>
</table>`;
    }
}

class TimeTrack extends StudioElement {
    render() {
        // 24 frames span 118 pixels, frame 0 starts 7 pixels in
        const x = frame => 7 + Math.round(frame * 118 / 24);
        let ticks = '';
        for (let f = 0; f <= 120; f += 3) {
            const major = f % 24 === 0;
            ticks += `<path d="M${x(f)}.5 ${major ? 8 : 7}V${major ? 16 : 9}"/>`;
            if (major) ticks += `<text x="${x(f) + 1}" y="17">${f}f</text>`;
        }
        return `
<style>
    :host { display: flex; flex-direction: column; flex: 1; min-width: 0; background: #c9c7c9; }
    .body { display: flex; flex: 1; }
    .tracks { display: flex; flex-direction: column; flex: 1; min-width: 0; padding-left: 1px; }
    .bar { height: 17px; overflow: hidden; background: linear-gradient(#7189b8 6px, #858386 6px); contain: inline-size; }
    .bar path { stroke: #3a383a; }
    .bar text { fill: #3c3a3c; font-size: 12px; }
    .rows { position: relative; flex: 1; background: #fdfdfd; }
    .row { height: 14px; }
    .row:nth-child(even) { background: #f3f2f4; }
    .row:nth-child(7) { background: #4a90d2; }
    .rows > svg { position: absolute; inset: 0; }
    .pointer { position: absolute; left: 92px; top: -6px; }
    .hscroll { padding: 2px 0 3px 3px; }
    .hscroll i, .vscroll i { display: block; background: #7e7c7e; border-radius: 2px; }
    .hscroll i { height: 3px; }
    .vscroll { flex: none; width: 8px; padding: 2px; }
    .vscroll i { width: 4px; height: 145px; }
    .side { display: flex; flex-direction: column; align-items: center; flex: none; width: 25px; padding-top: 2px; gap: 2px; background: #e7e5e7; border-right: 1px solid #fff; }
    .side icon-button { height: 21px; }
    hr { width: 18px; height: 1px; margin: 2px 0; border: 0; background: #cfcdcf; }
    .side :last-child { margin: auto 0 13px; }
</style>
<dock-tabs icons="timetrack graphs canvasmeta library sound"></dock-tabs>
<div class="body">
    <div class="tracks">
        <div class="bar"><svg width="100%" height="17" >
            <path d="M2 1H12L7 6Z" style="fill:#111"/>
            <rect x="49" y="6" width="3" height="11" fill="#d8b830"/><rect x="51" y="6" width="5" height="11" fill="#22d822"/>${ticks}
        </svg></div>
        <div class="rows">
            ${'<div class="row"></div>'.repeat(8)}
            <svg width="100%" height="100%">
                <path d="M${x(0)}.5 0V160" stroke="#8f8d8f"/>
                <path d="M${x(9)}.5 0V160" stroke="#6b62c8"/>
                <path d="M7 85L13 91L7 97L1 91ZM51 85L57 91L51 97L45 91Z" fill="#b9741c" stroke="#59401e"/>
                <path d="M7.500 85V97M51.500 85V97" stroke="#5a4a70"/>
            </svg>
            <studio-icon class="pointer" name="cursor" size="13"></studio-icon>
        </div>
        <div class="hscroll"><i></i></div>
    </div>
    <div class="vscroll"><i></i></div>
    <div class="side">
        <icon-button name="move" on></icon-button>
        <icon-button name="group"></icon-button>
        <icon-button name="scale"></icon-button>
        <hr>
        <icon-button name="diamondoff"></icon-button>
        <icon-button name="half"></icon-button>
        <icon-button name="playmark" size="9"></icon-button>
    </div>
</div>`;
    }
}

class InfoDock extends StudioElement {
    render() {
        return `
<style>
    :host { display: flex; flex-direction: column; flex: none; height: 147px; background: #fdfdfd; border-bottom: 2px solid #b6b4b6; }
    .values { display: flex; justify-content: space-between; padding: 3px 10px 0 4px; }
    dl { display: grid; grid-template-columns: auto 1fr; grid-auto-rows: 10px; column-gap: 2px; margin: 0; line-height: 10px; }
    dt { font-weight: bold; }
    dd { margin: 0; text-align: right; }
    h2 { margin: 9px 0 0; font: inherit; font-weight: bold; text-align: center; }
    .progress { display: flex; align-items: center; gap: 4px; padding: 0 5px 0 4px; }
    .bar { flex: 1; height: 21px; line-height: 19px; text-align: center; background: #5090d6; border: 1px solid #33659c; color: #24364c; }
    icon-button { width: 23px; height: 21px; }
</style>
<dock-tabs icons="note palette navigator info" active="3"></dock-tabs>
<div class="values">
    <dl><dt>X:</dt><dd>-138.88px</dd><dt>Y:</dt><dd>-127.945px</dd></dl>
    <dl><dt>R:</dt><dd>70.3%</dd><dt>G:</dt><dd>68.4%</dd><dt>B:</dt><dd>68.4%</dd><dt>A:</dt><dd>100.0%</dd></dl>
</div>
<h2>Render Progress:</h2>
<div class="progress">
    <div class="bar" role="progressbar" aria-valuenow="100">100.0%</div>
    <icon-button name="record" raised></icon-button>
</div>`;
    }
}

class ToolOptions extends StudioElement {
    render() {
        return `
<style>
    :host { display: flex; flex-direction: column; flex: none; height: 184px; background: #fdfdfd; border-bottom: 2px solid #b6b4b6; }
    div { padding: 3px 4px; }
    strong, span { display: block; }
</style>
<dock-tabs icons="arrow history"></dock-tabs>
<div><strong>Transform Tool</strong><span>Ctrl to rotate</span><span>Alt to scale</span><span>Shift to constrain</span></div>`;
    }
}

class LayersDock extends StudioElement {
    render() {
        return `
<style>
    :host { display: flex; flex-direction: column; flex: 1; background: #fdfdfd; border-bottom: 1px solid #b6b4b6; }
    .list { flex: 1; }
    table { width: 100%; border-collapse: collapse; table-layout: fixed; }
    th { height: 17px; padding: 0; color: #939193; text-align: left; }
    td { height: 15px; padding: 0; color: #222; }
    tr.selected td { background: #4a90d2; color: #fff; }
    tbody tr:last-child { background: #f4f3f5; }
    th:last-child { padding-left: 1px; }
    td:last-child { padding-left: 4px; }
    td:nth-child(3) { padding-left: 2px; }
    input { display: block; appearance: none; width: 11px; height: 11px; margin-left: 3px; background: #fff; border: 1px solid #999; border-radius: 2px; }
    input:checked::after { content: ""; display: block; width: 9px; height: 9px; background: #111; clip-path: polygon(10% 45%, 38% 62%, 85% 12%, 95% 28%, 42% 95%, 8% 65%); }
    .tools { display: flex; align-items: center; height: 24px; padding: 0 3px; gap: 1px; background: #e7e5e7; }
    .tools icon-button { width: 18px; }
    hr { width: 1px; height: 16px; margin: 0 4px; border: 0; background: #cfcdcf; }
</style>
<dock-tabs icons="layers canvases"></dock-tabs>
<div class="list"><table>
    <colgroup><col style="width:29px"><col style="width:13px"><col><col style="width:54px"></colgroup>
    <thead><tr><th></th><th></th><th>Name</th><th>Z Depth</th></tr></thead>
    <tbody>
        <tr class="selected"><td><input type="checkbox" aria-label="Circle" checked></td><td><studio-icon name="disc" size="11"></studio-icon></td><td>Circle</td><td>0.0</td></tr>
        <tr><td><input type="checkbox" aria-label="Rectangle006" checked></td><td><studio-icon name="square" size="10"></studio-icon></td><td>Rectangle006</td><td>1.0</td></tr>
    </tbody>
</table></div>
<div class="tools">
    <icon-button name="plus"></icon-button><hr>
    <icon-button name="up"></icon-button><icon-button name="down"></icon-button><hr>
    <icon-button name="group"></icon-button><icon-button name="newgroup"></icon-button><icon-button name="dupgroup"></icon-button><icon-button name="remove"></icon-button><hr>
    <icon-button name="cut"></icon-button><icon-button name="copy"></icon-button><icon-button name="paste"></icon-button>
</div>`;
    }
}

class TaskBar extends StudioElement {
    render() {
        const apps = ['taskview', 'obs', 'explorer', 'store', 'settings', 'shield', 'edge', 'chrome', 'synfig'];
        return `
<style>
    :host { display: grid; flex: none; grid-template-columns: 1fr auto 1fr; height: 40px; align-items: center; border-top: 1px solid #b6b4b6; background: linear-gradient(90deg, #e5f0f6, #e3eef8 25%, #d5dbf7 37%, #dfddf4 55%, #dddef2 68%, #e6eef6 82%, #e6edf5); color: #222; font: 10px/13px "Open Sans", "Noto Sans", sans-serif; }
    .weather { display: flex; align-items: center; gap: 4px; padding-left: 18px; }
    .weather div { position: relative; }
    .badge { position: absolute; top: -4px; right: -1px; width: 13px; height: 13px; border-radius: 50%; background: #c01a24; color: #fff; font-size: 9px; text-align: center; }
    .sub { color: #5b6068; }
    .apps { display: flex; align-items: center; }
    .apps button { position: relative; width: 37px; height: 34px; border-radius: 3px; }
    .search { display: flex; align-items: center; gap: 3px; width: 181px; height: 25px; margin: 0 3px; padding: 0 7px 0 9px; border-radius: 13px; background: #f6f8fd; border-bottom: 1px solid #c9cbe0; }
    .search input { flex: 1; padding-left: 6px; font-size: 11px; color: #222; }
    .search input::placeholder { color: #55585f; }
    .apps button:last-child::before { content: ""; position: absolute; inset: 0 3px; background: #eff1fb; border-radius: 3px; }
    .apps button:last-child::after { content: ""; position: absolute; left: 12px; bottom: 0; width: 13px; height: 3px; border-radius: 2px; background: #2a78b4; }
    .apps button:nth-of-type(3)::after { content: ""; position: absolute; bottom: 0; width: 5px; height: 2px; background: #888; }
    .apps studio-icon { position: relative; }
    .tray { display: flex; justify-content: flex-end; align-items: center; padding-right: 16px; gap: 7px; }
    .lang { padding: 0 7px 0 6px; text-align: center; }
    .clock { padding-left: 7px; text-align: right; }
    .mic { padding-left: 7px; }
</style>
<div class="weather"><div><studio-icon name="weather" size="20"></studio-icon><span class="badge">1</span></div><div>31°C<br><span class="sub">Partly sunny</span></div></div>
<div class="apps">
    <button type="button" aria-label="Start"><studio-icon name="start" size="20"></studio-icon></button>
    <label class="search"><studio-icon name="search" size="13"></studio-icon><input type="text" aria-label="Search" placeholder="Search"><studio-icon name="ball" size="15"></studio-icon><studio-icon name="whistle" size="15"></studio-icon></label>
    ${apps.map(n => `<button type="button" aria-label="${n}"><studio-icon name="${n}" size="20"></studio-icon></button>`).join('')}
</div>
<div class="tray">
    <studio-icon name="chevron"></studio-icon>
    <studio-icon class="mic" name="mic" size="15"></studio-icon>
    <span class="lang">ENG<br>US</span>
    <studio-icon name="wifi" size="13"></studio-icon>
    <studio-icon name="volume" size="13"></studio-icon>
    <studio-icon name="battery" size="16"></studio-icon>
    <span class="clock">6:11 PM<br>2/15/2026</span>
</div>`;
    }
}

class VitaMark extends StudioElement {
    render() {
        return `
<style>
    :host { position: absolute; top: 17px; right: 20px; display: flex; align-items: center; gap: 15px; opacity: .6; color: #fff; font: bold 28px/30px "DejaVu Sans", sans-serif; pointer-events: none; }
</style>
<svg width="34" height="30" viewBox="0 0 34 30"><path d="M7 8L17 22" stroke="#fff" stroke-width="9" stroke-linecap="round"/><circle cx="28" cy="8" r="5" fill="#fff"/></svg>
<span>VITA</span>`;
    }
}

class StudioDesktop extends StudioElement {
    render() {
        return `
<style>
    :host { position: relative; display: flex; flex-direction: column; min-height: 100vh; }
    .workspace { display: flex; flex: 1; }
    .left { display: flex; flex-direction: column; flex: 1; min-width: 0; }
    .top { display: flex; flex: 1; border-bottom: 1px solid #b6b4b6; }
    .bottom { display: flex; flex: none; height: 200px; }
    .right { display: flex; flex-direction: column; flex: none; width: 321px; border: solid #b6b4b6; border-width: 0 1px 0 2px; }
</style>
<title-bar></title-bar>
<menu-bar></menu-bar>
<div class="workspace">
    <div class="left">
        <div class="top"><tool-box></tool-box><canvas-window></canvas-window></div>
        <div class="bottom"><params-dock></params-dock><time-track></time-track></div>
    </div>
    <div class="right"><info-dock></info-dock><tool-options></tool-options><layers-dock></layers-dock></div>
</div>
<task-bar></task-bar>
<vita-mark></vita-mark>`;
    }
}

customElements.define('studio-icon', StudioIcon);
customElements.define('icon-button', IconButton);
customElements.define('dock-tabs', DockTabs);
customElements.define('title-bar', TitleBar);
customElements.define('menu-bar', MenuBar);
customElements.define('tool-box', ToolBox);
customElements.define('spin-box', SpinBox);
customElements.define('canvas-toolbar', CanvasToolbar);
customElements.define('canvas-ruler', CanvasRuler);
customElements.define('work-area', WorkArea);
customElements.define('canvas-window', CanvasWindow);
customElements.define('params-dock', ParamsDock);
customElements.define('time-track', TimeTrack);
customElements.define('info-dock', InfoDock);
customElements.define('tool-options', ToolOptions);
customElements.define('layers-dock', LayersDock);
customElements.define('task-bar', TaskBar);
customElements.define('vita-mark', VitaMark);
customElements.define('studio-desktop', StudioDesktop);
</script>
</body>
</html>
